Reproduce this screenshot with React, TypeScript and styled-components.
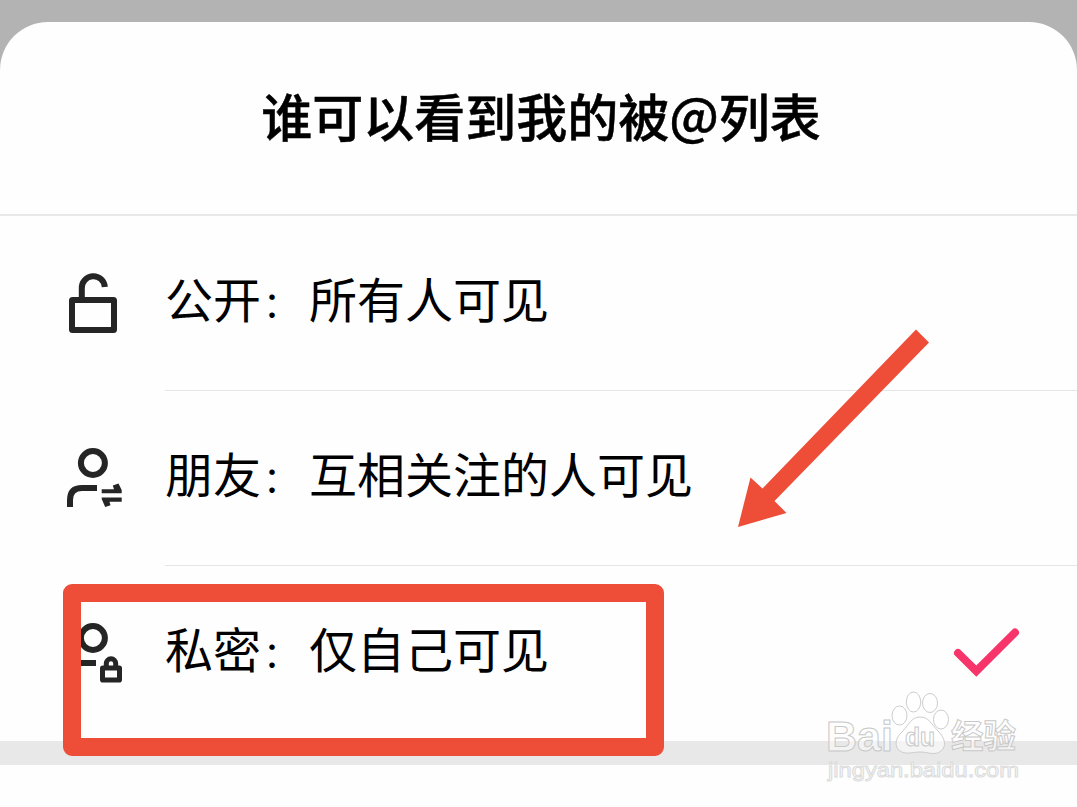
import React from 'react';
import styled, { createGlobalStyle } from 'styled-components';

const options = [
    { icon: <UnlockIcon />, label: '公开', detail: '所有人可见', checked: false },
    { icon: <FriendsIcon />, label: '朋友', detail: '互相关注的人可见', checked: false },
    { icon: <PrivateIcon />, label: '私密', detail: '仅自己可见', checked: true },
];

function App() {
    return (
        <>
            <GlobalStyle />
            <Screen>
                <Sheet>
                    <Header>
                        <Title>谁可以看到我的被<At>@</At>列表</Title>
                    </Header>
                    {options.map((option, i) => (
                        <Row key={option.label}>
                            <IconCell>{option.icon}</IconCell>
                            <RowBody $last={i === options.length - 1}>
                                <Label>
                                    {option.label}
                                    <Colon>：</Colon>
                                    {option.detail}
                                </Label>
                                {option.checked && <CheckIcon />}
                            </RowBody>
                        </Row>
                    ))}
                    <Gap />
                </Sheet>
                <Highlight />
                <Arrow viewBox="0 0 194 200">
                    <path d="M179 1.5 192 14.5 37.5 173 49.5 185 1 199 13.5 149.5 25.5 160.5Z" fill="#ee4d38" />
                </Arrow>
                <Watermark />
            </Screen>
        </>
    );
}

export default App;

function UnlockIcon() {
    return (
        <Icon viewBox="0 0 60 66">
            <rect x="7" y="30" width="42" height="30" rx="0.5" />
            <path d="M16.8 29V18.5a11.5 11.5 0 0 1 23 -1.5" />
        </Icon>
    );
}

function FriendsIcon() {
    return (
        <Icon viewBox="0 0 60 66">
            <circle cx="27.9" cy="18" r="12" />
            <path d="M5 62V55Q5 43 17 43H32" />
            <path d="M36.7 44.2H49L47.8 40.5 53.5 38.5 56.7 45V48.2H36.7ZM56.7 56.8H44.5L45.5 60.2 40.2 62 36.7 54V52.5H56.7Z" fill="#252525" stroke="none" />
        </Icon>
    );
}

function PrivateIcon() {
    return (
        <Icon viewBox="0 0 60 66">
            <circle cx="27.9" cy="18" r="12" />
            <path d="M5 62V55Q5 43 17 43H31" />
            <rect x="37.5" y="48" width="17" height="12" rx="0.3" strokeWidth="5" />
            <path d="M41.3 46V43.5a4.7 4.7 0 0 1 9.4 0V46" strokeWidth="5" />
        </Icon>
    );
}

function CheckIcon() {
    return (
        <Check viewBox="0 0 68 50">
            <path d="M5 25 23.3 43 62 4.5" />
        </Check>
    );
}

function Watermark() {
    return (
        <Mark viewBox="0 0 210 100">
            <MarkText x="4" y="61" $size={43} textLength="67" lengthAdjust="spacingAndGlyphs">Bai</MarkText>
            <ellipse cx="77.5" cy="25.5" rx="7.5" ry="9.5" />
            <ellipse cx="91.5" cy="12" rx="7.2" ry="10" />
            <ellipse cx="108" cy="13" rx="7.5" ry="9.5" />
            <ellipse cx="119" cy="29.5" rx="7.5" ry="9.5" />
            <path d="M98 27C89 27 87 35 80 42C73 48 72 57 78 61C84 65 91 62 98 62C106 62 113 66 119 61C125 56 123 48 116 41C109 34 107 27 98 27Z" />
            <MarkText x="83" y="56" $size={25} textLength="30" lengthAdjust="spacingAndGlyphs">du</MarkText>
            <MarkText x="129" y="58" $size={33} textLength="65" lengthAdjust="spacingAndGlyphs">经验</MarkText>
            <MarkText x="6" y="87" $size={20} $light textLength="191" lengthAdjust="spacingAndGlyphs">jingyan.baidu.com</MarkText>
        </Mark>
    );
}

const GlobalStyle = createGlobalStyle`
    body {
        margin: 0;
        background: #fff;
        font-family: 'Noto Sans CJK SC', sans-serif;
        color: #000;
    }
`;

const Screen = styled.div`
    position: relative;
    width: 1077px;
    height: 807px;
    box-sizing: border-box;
    padding-top: 22px;
    background: #b3b3b3;
    overflow: hidden;
`;

const Sheet = styled.div`
    height: 785px;
    background: #fefefe;
    border-radius: 48px 48px 0 0;
    overflow: hidden;
`;

const Header = styled.div`
    display: flex;
    height: 194px;
    box-sizing: border-box;
    justify-content: center;
    align-items: center;
    padding: 0 0 7px 5px;
    border-bottom: 2px solid #e8e8e8;
`;

const Title = styled.h1`
    margin: 0;
    font-size: 51px;
    line-height: 72px;
    font-weight: 500;
    white-space: nowrap;
    -webkit-text-stroke: 0.5px #000;
`;

const At = styled.span`
    display: inline-block;
    line-height: 1;
    transform: translateY(-2px);
`;

const Row = styled.div`
    display: flex;
    height: 175px;
`;

const IconCell = styled.div`
    width: 165px;
    display: flex;
    align-items: center;
    box-sizing: border-box;
    padding: 0 0 2px 65px;
`;

const RowBody = styled.div<{ $last?: boolean }>`
    flex: 1;
    display: flex;
    justify-content: space-between;
    align-items: center;
    box-sizing: border-box;
    padding-right: 56px;
    border-bottom: 1px solid ${(props) => (props.$last ? 'transparent' : '#e5e5e5')};
`;

const Label = styled.span`
    font-size: 48px;
    line-height: 70px;
    white-space: nowrap;
    margin-bottom: 13px;
`;

const Colon = styled.span`
    display: inline-block;
    width: 48px;
    box-sizing: border-box;
    padding-left: 2px;
    font-size: 36px;
    line-height: 1;
`;

const Icon = styled.svg`
    width: 60px;
    height: 66px;
    fill: none;
    stroke: #252525;
    stroke-width: 6;
`;

const Check = styled.svg`
    width: 68px;
    height: 50px;
    fill: none;
    stroke: #f7356b;
    stroke-width: 8;
    stroke-linecap: round;
`;

const Gap = styled.div`
    height: 24px;
    background: #e8e8e8;
`;

/* Annotations drawn over the sheet */
const Highlight = styled.div`
    position: absolute;
    left: 63px;
    top: 584px;
    width: 601px;
    height: 172px;
    box-sizing: border-box;
    border: 18px solid #ee4d38;
    border-radius: 9px;
`;

const Arrow = styled.svg`
    position: absolute;
    left: 737px;
    top: 328px;
    width: 194px;
    height: 200px;
`;

const Mark = styled.svg`
    position: absolute;
    left: 822px;
    top: 690px;
    width: 210px;
    height: 100px;
    fill: rgba(255, 255, 255, 0.5);
    stroke: #cdcdcd;
    stroke-width: 1;
`;

const MarkText = styled.text<{ $size: number; $light?: boolean }>`
    font-family: 'Liberation Sans', 'Noto Sans CJK SC', sans-serif;
    font-size: ${(props) => props.$size}px;
    font-weight: ${(props) => (props.$light ? 400 : 700)};
    stroke: ${(props) => (props.$light ? '#dcdcdc' : '#c8c8c8')};
`;
